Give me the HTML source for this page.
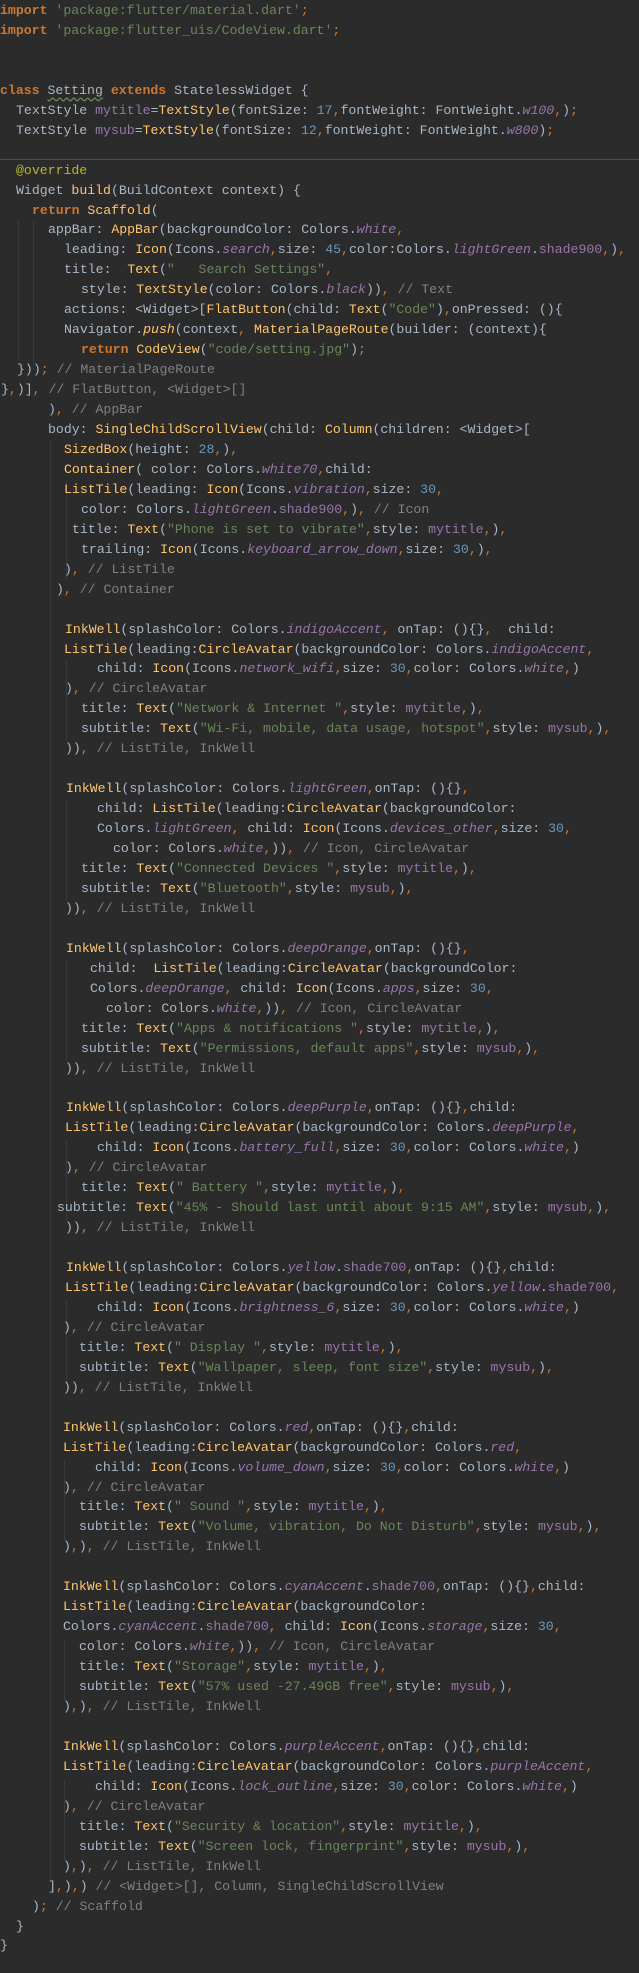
<!DOCTYPE html>
<html><head><meta charset="utf-8"><style>
html,body{margin:0;padding:0;background:#2b2b2b;}
body{width:639px;height:1973px;overflow:hidden;position:relative;font-family:"Liberation Mono",monospace;font-size:13.2px;color:#a9b7c6;}
#code{position:absolute;top:1px;left:0;width:639px;}
.l{height:19.96px;line-height:19.96px;white-space:pre;position:relative;}
.o{color:#cc7832}.s{color:#6a8759}.n{color:#6897bb}.p{color:#9876aa;font-style:italic}
.y{color:#ffc66d}.c{color:#808080}.m{color:#9876aa}.a{color:#bbb529}.yi{color:#ffc66d;font-style:italic}
.b{font-weight:bold}
.u{text-decoration:underline wavy #6a8759;text-underline-offset:3px}
.sep{position:absolute;left:0;top:159px;width:639px;height:1px;background:#4e4e4e;}
.g{position:absolute;width:1px;background:#3a3a3a;}
</style></head><body>
<div class="sep"></div>
<div class="g" style="left:18px;top:220px;height:140px"></div>
<div class="g" style="left:33px;top:220px;height:150px"></div>
<div class="g" style="left:50px;top:440px;height:1440px"></div>
<div class="g" style="left:66px;top:480px;height:100px"></div>
<div class="g" style="left:66px;top:660px;height:80px"></div>
<div class="g" style="left:66px;top:800px;height:100px"></div>
<div class="g" style="left:66px;top:960px;height:100px"></div>
<div class="g" style="left:66px;top:1140px;height:80px"></div>
<div class="g" style="left:66px;top:1300px;height:80px"></div>
<div class="g" style="left:64px;top:1460px;height:80px"></div>
<div class="g" style="left:64px;top:1640px;height:60px"></div>
<div class="g" style="left:64px;top:1780px;height:80px"></div>
<div id="code">
<div class="l" style="padding-left:0px"><span class="o b">import </span><span class="s">'package:flutter/material.dart'</span><span class="o">;</span></div>
<div class="l" style="padding-left:0px"><span class="o b">import </span><span class="s">'package:flutter_uis/CodeView.dart'</span><span class="o">;</span></div>
<div class="l"></div>
<div class="l"></div>
<div class="l" style="padding-left:0px"><span class="o b">class </span><span class="u">Setting</span> <span class="o b">extends </span>StatelessWidget {</div>
<div class="l" style="padding-left:16px">TextStyle <span class="m">mytitle</span>=<span class="y">TextStyle</span>(fontSize: <span class="n">17</span><span class="o">,</span>fontWeight: FontWeight.<span class="p">w100</span><span class="o">,</span>)<span class="o">;</span></div>
<div class="l" style="padding-left:16px">TextStyle <span class="m">mysub</span>=<span class="y">TextStyle</span>(fontSize: <span class="n">12</span><span class="o">,</span>fontWeight: FontWeight.<span class="p">w800</span>)<span class="o">;</span></div>
<div class="l"></div>
<div class="l" style="padding-left:16px"><span class="a">@override</span></div>
<div class="l" style="padding-left:16px">Widget <span class="y">build</span>(BuildContext context) {</div>
<div class="l" style="padding-left:32px"><span class="o b">return </span><span class="y">Scaffold</span>(</div>
<div class="l" style="padding-left:48px">appBar: <span class="y">AppBar</span>(backgroundColor: Colors.<span class="p">white</span><span class="o">,</span></div>
<div class="l" style="padding-left:64px">leading: <span class="y">Icon</span>(Icons.<span class="p">search</span><span class="o">,</span>size: <span class="n">45</span><span class="o">,</span>color:Colors.<span class="p">lightGreen</span>.<span class="m">shade900</span><span class="o">,</span>)<span class="o">,</span></div>
<div class="l" style="padding-left:64px">title:  <span class="y">Text</span>(<span class="s">"   Search Settings"</span><span class="o">,</span></div>
<div class="l" style="padding-left:81px">style: <span class="y">TextStyle</span>(color: Colors.<span class="p">black</span>))<span class="o">,</span> <span class="c">// Text</span></div>
<div class="l" style="padding-left:64px">actions: &lt;Widget&gt;[<span class="y">FlatButton</span>(child: <span class="y">Text</span>(<span class="s">"Code"</span>)<span class="o">,</span>onPressed: (){</div>
<div class="l" style="padding-left:64px">Navigator.<span class="yi">push</span>(context<span class="o">,</span> <span class="y">MaterialPageRoute</span>(builder: (context){</div>
<div class="l" style="padding-left:81px"><span class="o b">return </span><span class="y">CodeView</span>(<span class="s">"code/setting.jpg"</span>)<span class="o">;</span></div>
<div class="l" style="padding-left:17px">}))<span class="o">;</span> <span class="c">// MaterialPageRoute</span></div>
<div class="l" style="padding-left:1px">}<span class="o">,</span>)]<span class="o">,</span> <span class="c">// FlatButton, &lt;Widget&gt;[]</span></div>
<div class="l" style="padding-left:48px">)<span class="o">,</span> <span class="c">// AppBar</span></div>
<div class="l" style="padding-left:48px">body: <span class="y">SingleChildScrollView</span>(child: <span class="y">Column</span>(children: &lt;Widget&gt;[</div>
<div class="l" style="padding-left:64px"><span class="y">SizedBox</span>(height: <span class="n">28</span><span class="o">,</span>)<span class="o">,</span></div>
<div class="l" style="padding-left:64px"><span class="y">Container</span>( color: Colors.<span class="p">white70</span><span class="o">,</span>child:</div>
<div class="l" style="padding-left:64px"><span class="y">ListTile</span>(leading: <span class="y">Icon</span>(Icons.<span class="p">vibration</span><span class="o">,</span>size: <span class="n">30</span><span class="o">,</span></div>
<div class="l" style="padding-left:81px">color: Colors.<span class="p">lightGreen</span>.<span class="m">shade900</span><span class="o">,</span>)<span class="o">,</span> <span class="c">// Icon</span></div>
<div class="l" style="padding-left:72px">title: <span class="y">Text</span>(<span class="s">"Phone is set to vibrate"</span><span class="o">,</span>style: <span class="m">mytitle</span><span class="o">,</span>)<span class="o">,</span></div>
<div class="l" style="padding-left:81px">trailing: <span class="y">Icon</span>(Icons.<span class="p">keyboard_arrow_down</span><span class="o">,</span>size: <span class="n">30</span><span class="o">,</span>)<span class="o">,</span></div>
<div class="l" style="padding-left:64px">)<span class="o">,</span> <span class="c">// ListTile</span></div>
<div class="l" style="padding-left:56px">)<span class="o">,</span> <span class="c">// Container</span></div>
<div class="l"></div>
<div class="l" style="padding-left:65px"><span class="y">InkWell</span>(splashColor: Colors.<span class="p">indigoAccent</span><span class="o">,</span> onTap: (){}<span class="o">,</span>  child:</div>
<div class="l" style="padding-left:64px"><span class="y">ListTile</span>(leading:<span class="y">CircleAvatar</span>(backgroundColor: Colors.<span class="p">indigoAccent</span><span class="o">,</span></div>
<div class="l" style="padding-left:97px">child: <span class="y">Icon</span>(Icons.<span class="p">network_wifi</span><span class="o">,</span>size: <span class="n">30</span><span class="o">,</span>color: Colors.<span class="p">white</span><span class="o">,</span>)</div>
<div class="l" style="padding-left:65px">)<span class="o">,</span> <span class="c">// CircleAvatar</span></div>
<div class="l" style="padding-left:81px">title: <span class="y">Text</span>(<span class="s">"Network &amp; Internet "</span><span class="o">,</span>style: <span class="m">mytitle</span><span class="o">,</span>)<span class="o">,</span></div>
<div class="l" style="padding-left:81px">subtitle: <span class="y">Text</span>(<span class="s">"Wi-Fi, mobile, data usage, hotspot"</span><span class="o">,</span>style: <span class="m">mysub</span><span class="o">,</span>)<span class="o">,</span></div>
<div class="l" style="padding-left:65px">))<span class="o">,</span> <span class="c">// ListTile, InkWell</span></div>
<div class="l"></div>
<div class="l" style="padding-left:66px"><span class="y">InkWell</span>(splashColor: Colors.<span class="p">lightGreen</span><span class="o">,</span>onTap: (){}<span class="o">,</span></div>
<div class="l" style="padding-left:97px">child: <span class="y">ListTile</span>(leading:<span class="y">CircleAvatar</span>(backgroundColor:</div>
<div class="l" style="padding-left:97px">Colors.<span class="p">lightGreen</span><span class="o">,</span> child: <span class="y">Icon</span>(Icons.<span class="p">devices_other</span><span class="o">,</span>size: <span class="n">30</span><span class="o">,</span></div>
<div class="l" style="padding-left:113px">color: Colors.<span class="p">white</span><span class="o">,</span>))<span class="o">,</span> <span class="c">// Icon, CircleAvatar</span></div>
<div class="l" style="padding-left:81px">title: <span class="y">Text</span>(<span class="s">"Connected Devices "</span><span class="o">,</span>style: <span class="m">mytitle</span><span class="o">,</span>)<span class="o">,</span></div>
<div class="l" style="padding-left:81px">subtitle: <span class="y">Text</span>(<span class="s">"Bluetooth"</span><span class="o">,</span>style: <span class="m">mysub</span><span class="o">,</span>)<span class="o">,</span></div>
<div class="l" style="padding-left:65px">))<span class="o">,</span> <span class="c">// ListTile, InkWell</span></div>
<div class="l"></div>
<div class="l" style="padding-left:66px"><span class="y">InkWell</span>(splashColor: Colors.<span class="p">deepOrange</span><span class="o">,</span>onTap: (){}<span class="o">,</span></div>
<div class="l" style="padding-left:90px">child:  <span class="y">ListTile</span>(leading:<span class="y">CircleAvatar</span>(backgroundColor:</div>
<div class="l" style="padding-left:90px">Colors.<span class="p">deepOrange</span><span class="o">,</span> child: <span class="y">Icon</span>(Icons.<span class="p">apps</span><span class="o">,</span>size: <span class="n">30</span><span class="o">,</span></div>
<div class="l" style="padding-left:106px">color: Colors.<span class="p">white</span><span class="o">,</span>))<span class="o">,</span> <span class="c">// Icon, CircleAvatar</span></div>
<div class="l" style="padding-left:81px">title: <span class="y">Text</span>(<span class="s">"Apps &amp; notifications "</span><span class="o">,</span>style: <span class="m">mytitle</span><span class="o">,</span>)<span class="o">,</span></div>
<div class="l" style="padding-left:81px">subtitle: <span class="y">Text</span>(<span class="s">"Permissions, default apps"</span><span class="o">,</span>style: <span class="m">mysub</span><span class="o">,</span>)<span class="o">,</span></div>
<div class="l" style="padding-left:65px">))<span class="o">,</span> <span class="c">// ListTile, InkWell</span></div>
<div class="l"></div>
<div class="l" style="padding-left:66px"><span class="y">InkWell</span>(splashColor: Colors.<span class="p">deepPurple</span><span class="o">,</span>onTap: (){}<span class="o">,</span>child:</div>
<div class="l" style="padding-left:65px"><span class="y">ListTile</span>(leading:<span class="y">CircleAvatar</span>(backgroundColor: Colors.<span class="p">deepPurple</span><span class="o">,</span></div>
<div class="l" style="padding-left:97px">child: <span class="y">Icon</span>(Icons.<span class="p">battery_full</span><span class="o">,</span>size: <span class="n">30</span><span class="o">,</span>color: Colors.<span class="p">white</span><span class="o">,</span>)</div>
<div class="l" style="padding-left:65px">)<span class="o">,</span> <span class="c">// CircleAvatar</span></div>
<div class="l" style="padding-left:81px">title: <span class="y">Text</span>(<span class="s">" Battery "</span><span class="o">,</span>style: <span class="m">mytitle</span><span class="o">,</span>)<span class="o">,</span></div>
<div class="l" style="padding-left:57px">subtitle: <span class="y">Text</span>(<span class="s">"45% - Should last until about 9:15 AM"</span><span class="o">,</span>style: <span class="m">mysub</span><span class="o">,</span>)<span class="o">,</span></div>
<div class="l" style="padding-left:65px">))<span class="o">,</span> <span class="c">// ListTile, InkWell</span></div>
<div class="l"></div>
<div class="l" style="padding-left:66px"><span class="y">InkWell</span>(splashColor: Colors.<span class="p">yellow</span>.<span class="m">shade700</span><span class="o">,</span>onTap: (){}<span class="o">,</span>child:</div>
<div class="l" style="padding-left:65px"><span class="y">ListTile</span>(leading:<span class="y">CircleAvatar</span>(backgroundColor: Colors.<span class="p">yellow</span>.<span class="m">shade700</span><span class="o">,</span></div>
<div class="l" style="padding-left:97px">child: <span class="y">Icon</span>(Icons.<span class="p">brightness_6</span><span class="o">,</span>size: <span class="n">30</span><span class="o">,</span>color: Colors.<span class="p">white</span><span class="o">,</span>)</div>
<div class="l" style="padding-left:63px">)<span class="o">,</span> <span class="c">// CircleAvatar</span></div>
<div class="l" style="padding-left:79px">title: <span class="y">Text</span>(<span class="s">" Display "</span><span class="o">,</span>style: <span class="m">mytitle</span><span class="o">,</span>)<span class="o">,</span></div>
<div class="l" style="padding-left:79px">subtitle: <span class="y">Text</span>(<span class="s">"Wallpaper, sleep, font size"</span><span class="o">,</span>style: <span class="m">mysub</span><span class="o">,</span>)<span class="o">,</span></div>
<div class="l" style="padding-left:63px">))<span class="o">,</span> <span class="c">// ListTile, InkWell</span></div>
<div class="l"></div>
<div class="l" style="padding-left:63px"><span class="y">InkWell</span>(splashColor: Colors.<span class="p">red</span><span class="o">,</span>onTap: (){}<span class="o">,</span>child:</div>
<div class="l" style="padding-left:63px"><span class="y">ListTile</span>(leading:<span class="y">CircleAvatar</span>(backgroundColor: Colors.<span class="p">red</span><span class="o">,</span></div>
<div class="l" style="padding-left:95px">child: <span class="y">Icon</span>(Icons.<span class="p">volume_down</span><span class="o">,</span>size: <span class="n">30</span><span class="o">,</span>color: Colors.<span class="p">white</span><span class="o">,</span>)</div>
<div class="l" style="padding-left:63px">)<span class="o">,</span> <span class="c">// CircleAvatar</span></div>
<div class="l" style="padding-left:79px">title: <span class="y">Text</span>(<span class="s">" Sound "</span><span class="o">,</span>style: <span class="m">mytitle</span><span class="o">,</span>)<span class="o">,</span></div>
<div class="l" style="padding-left:79px">subtitle: <span class="y">Text</span>(<span class="s">"Volume, vibration, Do Not Disturb"</span><span class="o">,</span>style: <span class="m">mysub</span><span class="o">,</span>)<span class="o">,</span></div>
<div class="l" style="padding-left:63px">)<span class="o">,</span>)<span class="o">,</span> <span class="c">// ListTile, InkWell</span></div>
<div class="l"></div>
<div class="l" style="padding-left:63px"><span class="y">InkWell</span>(splashColor: Colors.<span class="p">cyanAccent</span>.<span class="m">shade700</span><span class="o">,</span>onTap: (){}<span class="o">,</span>child:</div>
<div class="l" style="padding-left:63px"><span class="y">ListTile</span>(leading:<span class="y">CircleAvatar</span>(backgroundColor:</div>
<div class="l" style="padding-left:63px">Colors.<span class="p">cyanAccent</span>.<span class="m">shade700</span><span class="o">,</span> child: <span class="y">Icon</span>(Icons.<span class="p">storage</span><span class="o">,</span>size: <span class="n">30</span><span class="o">,</span></div>
<div class="l" style="padding-left:79px">color: Colors.<span class="p">white</span><span class="o">,</span>))<span class="o">,</span> <span class="c">// Icon, CircleAvatar</span></div>
<div class="l" style="padding-left:79px">title: <span class="y">Text</span>(<span class="s">"Storage"</span><span class="o">,</span>style: <span class="m">mytitle</span><span class="o">,</span>)<span class="o">,</span></div>
<div class="l" style="padding-left:79px">subtitle: <span class="y">Text</span>(<span class="s">"57% used -27.49GB free"</span><span class="o">,</span>style: <span class="m">mysub</span><span class="o">,</span>)<span class="o">,</span></div>
<div class="l" style="padding-left:63px">)<span class="o">,</span>)<span class="o">,</span> <span class="c">// ListTile, InkWell</span></div>
<div class="l"></div>
<div class="l" style="padding-left:63px"><span class="y">InkWell</span>(splashColor: Colors.<span class="p">purpleAccent</span><span class="o">,</span>onTap: (){}<span class="o">,</span>child:</div>
<div class="l" style="padding-left:63px"><span class="y">ListTile</span>(leading:<span class="y">CircleAvatar</span>(backgroundColor: Colors.<span class="p">purpleAccent</span><span class="o">,</span></div>
<div class="l" style="padding-left:95px">child: <span class="y">Icon</span>(Icons.<span class="p">lock_outline</span><span class="o">,</span>size: <span class="n">30</span><span class="o">,</span>color: Colors.<span class="p">white</span><span class="o">,</span>)</div>
<div class="l" style="padding-left:63px">)<span class="o">,</span> <span class="c">// CircleAvatar</span></div>
<div class="l" style="padding-left:79px">title: <span class="y">Text</span>(<span class="s">"Security &amp; location"</span><span class="o">,</span>style: <span class="m">mytitle</span><span class="o">,</span>)<span class="o">,</span></div>
<div class="l" style="padding-left:79px">subtitle: <span class="y">Text</span>(<span class="s">"Screen lock, fingerprint"</span><span class="o">,</span>style: <span class="m">mysub</span><span class="o">,</span>)<span class="o">,</span></div>
<div class="l" style="padding-left:63px">)<span class="o">,</span>)<span class="o">,</span> <span class="c">// ListTile, InkWell</span></div>
<div class="l" style="padding-left:48px">]<span class="o">,</span>)<span class="o">,</span>) <span class="c">// &lt;Widget&gt;[], Column, SingleChildScrollView</span></div>
<div class="l" style="padding-left:32px">)<span class="o">;</span> <span class="c">// Scaffold</span></div>
<div class="l" style="padding-left:16px">}</div>
<div class="l" style="padding-left:0px">}</div>
</div>
</body></html>
